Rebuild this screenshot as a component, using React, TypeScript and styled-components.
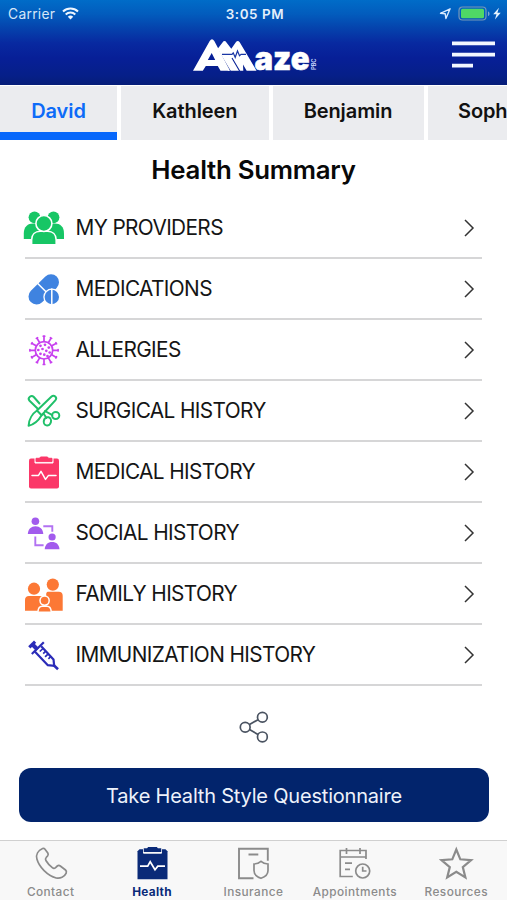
import React from "react";
import styled, { createGlobalStyle } from "styled-components";

const Global = createGlobalStyle`
  * { box-sizing: border-box; }
  body { margin: 0; background: #fff; font-family: Inter, "Liberation Sans", sans-serif; }
  svg { display: block; flex: none; overflow: visible; }
`;

const Screen = styled.div`
  width: 507px;
  height: 900px;
  display: flex;
  flex-direction: column;
  overflow: hidden;
  background: #fff;
`;

const Header = styled.header`
  height: 85px;
  flex: none;
  background: linear-gradient(#006cc8 0, #025cbd 14px, #0545ae 27px, #0829a0 43px, #071f97 58px, #061f88 76px, #061d78 85px);
  color: #fff;
`;

const StatusBar = styled.div`
  height: 27px;
  display: grid;
  grid-template-columns: 1fr auto 1fr;
  align-items: center;
  padding: 0 5px 0 8px;
`;

const StatusGroup = styled.div<{ $end?: boolean }>`
  display: flex;
  align-items: center;
  gap: 7px;
  justify-content: ${(p) => (p.$end ? "flex-end" : "flex-start")};
`;

const Carrier = styled.span`
  font-size: 13.8px;
  letter-spacing: 0.3px;
  color: #d5e6f8;
`;

const Clock = styled.span`
  font-size: 13.4px;
  font-weight: 600;
  letter-spacing: 0.6px;
  color: #e4effb;
`;

const Brand = styled.div`
  height: 58px;
  display: grid;
  grid-template-columns: 192px 126px 1fr;
  align-items: start;
`;

const MenuButton = styled.button`
  justify-self: end;
  margin: 14px 12px 0 0;
  padding: 0;
  border: 0;
  background: none;
`;

const PersonTabs = styled.nav`
  height: 55px;
  flex: none;
  display: flex;
  gap: 4px;
  padding-top: 1px;
  overflow: hidden;
`;

const PersonTab = styled.button<{ $width: number; $active?: boolean }>`
  flex: none;
  width: ${(p) => p.$width}px;
  border: 0;
  border-bottom: 8px solid ${(p) => (p.$active ? "#0767fb" : "#ebecef")};
  background: #ebecef;
  color: ${(p) => (p.$active ? "#0d6bf8" : "#111")};
  font: 600 20px Inter, sans-serif;
  letter-spacing: -0.1px;
  padding: 4px 0 0;
`;

const Title = styled.h1`
  margin: 0;
  height: 58px;
  line-height: 60px;
  text-align: center;
  font-size: 25.8px;
  letter-spacing: -0.25px;
  font-weight: 600;
  color: #080808;
`;

const List = styled.ul`
  list-style: none;
  margin: 0 25px;
  padding: 0;
`;

const Row = styled.li`
  height: 61px;
  display: flex;
  align-items: center;
  border-bottom: 2px solid #d6d6d7;
  padding-right: 7px;

  > svg:first-child { margin: 0 12.5px 0 -2px; }
`;

const RowLabel = styled.span`
  flex: 1;
  font-size: 20.8px;
  letter-spacing: -0.62px;
  color: #151515;
`;

const ShareArea = styled.div`
  flex: none;
  height: 82px;
  display: flex;
  justify-content: center;
  padding-top: 23px;
`;

const Questionnaire = styled.button`
  flex: none;
  height: 54px;
  margin: 0 18px 0 19px;
  border: 0;
  border-radius: 12px;
  background: #02246c;
  color: #eef2fb;
  font: 400 20px Inter, sans-serif;
  letter-spacing: -0.2px;
  padding: 2px 0 0;
`;

const BottomBar = styled.nav`
  margin-top: auto;
  height: 60px;
  flex: none;
  display: grid;
  grid-template-columns: repeat(5, 1fr);
  border-top: 1px solid #d0d0d0;
  background: #f8f8f8;
`;

const BottomItem = styled.div<{ $active?: boolean }>`
  display: flex;
  flex-direction: column;
  align-items: center;
  padding: 4px 0 0;
  gap: 4px;
  white-space: nowrap;
  color: ${(p) => (p.$active ? "#0a2a78" : "#8b8b8b")};
  font-size: 11.8px;
  font-weight: ${(p) => (p.$active ? 700 : 500)};
  letter-spacing: ${(p) => (p.$active ? 0.3 : 0.45)}px;
  line-height: 15px;
`;

type IconProps = { children: React.ReactNode };
const RowIcon = ({ children }: IconProps) => (
  <svg width="40" height="40" viewBox="0 0 40 40" fill="none" strokeLinecap="round" strokeLinejoin="round">
    {children}
  </svg>
);

const Providers = () => (
  <RowIcon>
    <g fill="#17c665">
      <circle cx="11.500" cy="9.300" r="5.900" />
      <circle cx="30.500" cy="9.300" r="5.900" />
      <path d="M.8 31V25.500C.8 18.500 5 15.500 10 15.500h22c5 0 9 3 9 10V31Z" />
    </g>
    <g fill="#17c665" stroke="#fff" strokeWidth="1.600">
      <path d="M8.600 36.800V32c0-5.500 3.600-8.700 8.600-8.700h7.400c5 0 8.600 3.200 8.600 8.700v4.800Z" />
      <circle cx="20.900" cy="15.500" r="8" />
    </g>
  </RowIcon>
);

const Medications = () => (
  <RowIcon>
    <path d="M13.500 27.500 28 13.200" stroke="#3f83e0" strokeWidth="16" />
    <path d="m14.500 14.200 12.500 12.500" stroke="#fff" strokeWidth="1.500" />
    <circle cx="28.800" cy="28" r="8.500" fill="#fff" />
    <circle cx="28.800" cy="28" r="7.200" fill="#3f83e0" />
    <path d="M28.800 20v16" stroke="#fff" strokeWidth="1.500" />
  </RowIcon>
);

const spokes = Array.from({ length: 12 }, (_, i) => i * 30);
const spots = [[17.5, 15.8], [22, 14.8], [25.8, 17.6], [15.3, 20], [19.5, 19], [23.3, 20.8], [26.7, 22.5], [17.5, 23.8], [21.3, 24.7], [24.5, 26]];
const Allergies = () => (
  <RowIcon>
    <g stroke="#c840ef" strokeWidth="1.700">
      <circle cx="21" cy="20.300" r="8.700" />
      {spokes.map((a) => (
        <path key={a} d="M21 11.300V6.500M20.300 6.200h1.400" transform={`rotate(${a} 21 20.300)`} />
      ))}
    </g>
    {spots.map(([x, y]) => <circle key={`${x}-${y}`} cx={x} cy={y} r="1.350" fill="#c840ef" />)}
  </RowIcon>
);

const Surgical = () => (
  <RowIcon>
    <g stroke="#20c06a" strokeWidth="2">
      <path d="M16.500 12.500 10.800 6C8.300 3.500 4.300 6.500 6.300 9.500L14.500 17.500" />
      <path d="M14 19.500 28.300 5.700c2.700-2.500 6.500.8 4 3.700L18.600 24.200Z" />
      <path d="M14 19.500C9.500 22.500 5.800 28.500 5.600 34.700c4.500-1 9.800-5 13-10.500" />
      <path d="m22 20 7.300 4.200M20.500 22.500l3 4.500" />
      <ellipse cx="24.400" cy="30.300" rx="3.600" ry="4.200" transform="rotate(15 24.400 30.300)" />
      <ellipse cx="32.700" cy="24.500" rx="3.600" ry="3.400" />
    </g>
  </RowIcon>
);

const Medical = () => (
  <RowIcon>
    <path d="M8 6.500h26a2 2 0 0 1 2 2v26a2 2 0 0 1-2 2H8a2 2 0 0 1-2-2v-26a2 2 0 0 1 2-2Z" fill="#fb3768" />
    <path d="M12 6v5h18V6" fill="#fff" stroke="#fff" strokeWidth="1" />
    <path d="M13 9.200V6.300h3.500l1-1.300h7l1 1.300H29v2.900Z" fill="#fb3768" stroke="#fb3768" strokeWidth="1" />
    <path d="M9 23.400h6.500l2.500-4 4.500 8 3-4H33" stroke="#fff" strokeWidth="1.500" />
  </RowIcon>
);

const Social = () => (
  <RowIcon>
    <g fill="#a25bed">
      <circle cx="12.400" cy="8.200" r="3.800" />
      <path d="M4.800 21c.3-4.900 3.400-7.700 7.700-7.700s7.500 2.800 7.800 7.700Z" />
      <circle cx="29.100" cy="24" r="3.600" />
      <path d="M21.700 36.200c.3-4.600 3.300-7.200 7.400-7.200s7.100 2.600 7.400 7.200Z" />
    </g>
    <g stroke="#b272f2" strokeWidth="1.900" strokeLinecap="butt" strokeLinejoin="miter">
      <path d="M20.300 13.200h9v5.500M12.300 23.500v8.700h8.300" />
    </g>
  </RowIcon>
);

const Family = () => (
  <RowIcon>
    <g fill="#fc7835">
      <circle cx="11" cy="14.700" r="6.100" />
      <circle cx="29.800" cy="10.600" r="6.100" />
      <path d="M2 36.700V26c0-2.500 1.500-3.900 4-3.900h11l5 1 1.200-1V20c0-1.600 1-2.200 2.500-2.200h10c2.700 0 4 1.400 4 4v14.900Z" />
    </g>
    <g stroke="#fff" strokeWidth="1.500" fill="#fc7835">
      <path d="M15 37.500c.2-3.700 1.800-5.300 4.200-5.300h4.800c2.400 0 4 1.600 4.200 5.300" />
      <circle cx="21.600" cy="26.600" r="4.600" />
    </g>
  </RowIcon>
);

const Syringe = () => (
  <RowIcon>
    <g stroke="#2b2cb8" strokeWidth="2.200" strokeLinecap="butt" strokeLinejoin="miter">
      <path d="m6.300 12.300 5.800-5.600" strokeWidth="3.200" />
      <path d="m9.500 9.500 5 5" strokeWidth="4" />
      <path d="m8.800 19 12-11.700" />
      <path d="m11.800 16.500 13 13.700 6.400.6-.7-6.400L18.200 11.200" />
      <path d="m30.500 30 4.500 4.200" strokeWidth="2.600" />
      <path d="m20 13.500-3.200 3M22.700 16.200l-2.500 2.400M25.200 18.800l-3.100 3M27.800 21.500l-2.400 2.300" strokeWidth="1.700" />
    </g>
  </RowIcon>
);

const Chevron = () => (
  <svg width="12" height="18" viewBox="0 0 12 18" fill="none" stroke="#333" strokeWidth="1.500">
    <path d="m2 1 8 8-8 8" />
  </svg>
);

const Wifi = () => (
  <svg width="17" height="13" viewBox="0 0 17 13" fill="none" stroke="#eef6ff" strokeWidth="2">
    <path d="M1 4.500a10.800 10.800 0 0 1 15 0M3.700 7.500a7 7 0 0 1 9.600 0" />
    <path d="M5.800 9.700a4 4 0 0 1 5.400 0L8.500 12.400Z" fill="#eef6ff" stroke="none" />
  </svg>
);

const Power = () => (
  <svg width="63" height="16" viewBox="0 0 63 16" fill="none">
    <path d="m1.500 7.300 9.600-4.500-4.200 9.700-.7-4.700Z" stroke="#d9eaff" strokeWidth="1.400" strokeLinejoin="round" />
    <rect x="20" y="1" width="27" height="13" rx="3.500" stroke="#7697b8" strokeWidth="1.200" />
    <rect x="22" y="2.800" width="23" height="9.400" rx="1.500" fill="#4fd865" />
    <path d="M49 5.500V10c2-.6 2-3.900 0-4.500Z" fill="#7da4d0" />
    <path d="m60 1.700-5.800 6.500h3.300l-1.600 5.300 5.800-6.800h-3.300Z" fill="#e6f3ff" />
  </svg>
);

const Logo = () => (
  <svg width="126" height="50" viewBox="192 27 126 50">
    <path d="m217.500 49 5-6.600q2-2.600 4 0l4.800 6.400 4.700-6.800q1.900-2.300 3.700.3L256.500 70.700h-9.800l-3.700-6.200.3 6.200H228Z" fill="#fff" />
    <path d="m216.500 48 14.300 24M232 58l8.500 14.500" stroke="#0a2396" strokeWidth="1.100" />
    <path d="M193 70.700 209.700 41q2.300-3.500 4.600 0l15.700 29.700h-9.500l-2.700-4.700h-12l-3 4.700Zm14.800-10.700h7.400l-3.500-7Z" fill="#fff" fillRule="evenodd" />
    <path d="M222 54.300h10l1.200-1.500 2 4.500 2.300-6.300 2 4.800 1.500-1.500h5" fill="none" stroke="#1a37a5" strokeWidth="1.200" />
    <text x="254.500" y="70.300" fontFamily="Inter" fontSize="33" fontWeight="900" fill="#fff" stroke="#fff" strokeWidth=".5" textLength="55" lengthAdjust="spacingAndGlyphs">aze</text>
    <text transform="translate(315.500 70) rotate(-90)" fontFamily="Inter" fontSize="5.800" fontWeight="600" fill="#cfdcff" textLength="11.500">PBC</text>
  </svg>
);

const MenuIcon = () => (
  <svg width="43" height="28" viewBox="0 0 43 28" fill="#f2f7ff">
    <path d="M0 .5h43v3.700H0ZM0 11.800h43v3.700H0ZM0 22.800h21v3.700H0Z" />
  </svg>
);

const ShareIcon = () => (
  <svg width="30" height="34" viewBox="0 0 30 34" fill="none" stroke="#4a5361" strokeWidth="1.700">
    <circle cx="6.200" cy="18.200" r="4.900" />
    <circle cx="23.400" cy="8.200" r="4.900" />
    <circle cx="23.400" cy="27.900" r="4.900" />
    <path d="m10.500 15.600 8.500-4.900m-8.500 9.900 8.500 4.900" />
  </svg>
);

const NavIcon = ({ children }: IconProps) => (
  <svg width="34" height="36" viewBox="0 0 34 36" fill="none" stroke="currentColor" strokeWidth="1.700">
    {children}
  </svg>
);

const ContactIcon = () => (
  <NavIcon>
    <path d="M8.600 3.500c-4.500 2-7 6-5.700 10.600C5 22 13.500 30.800 22.200 33c4 .8 8.300-1 10-4.800.5-1.400.3-2.300-.7-3.200l-5.200-4c-1-.8-2-.8-3 0l-2 1.800c-1 .9-2 .7-3-.1-3-2.400-5-4.800-6.400-7.200-.7-1.200-.6-2 .3-3l1.500-1.800c.7-1 .7-1.700.1-2.700l-3-4c-.6-.8-1.300-.9-2.200-.5Z" />
  </NavIcon>
);

const HealthIcon = () => (
  <NavIcon>
    <path d="M4.500 4.200h26l2 2v28h-30v-28Z" fill="currentColor" stroke="none" />
    <path d="M8.500 3v5.200h18V3" fill="#f8f8f8" stroke="#f8f8f8" strokeWidth="1" />
    <path d="M9.500 6.300V4h3l1-1.300h8l1 1.300h3v2.300Z" fill="currentColor" strokeWidth="1.500" />
    <path d="M5 21.200h7.700l2.500-4.500 4.800 8 2.800-3.500H30" stroke="#fff" strokeWidth="1.700" />
  </NavIcon>
);

const InsuranceIcon = () => (
  <NavIcon>
    <path d="M17.500 33.300H3V3.700h28.800v12M12.500 9.500h9.800" strokeWidth="1.900" />
    <path d="M25 16.300c2 1.800 4.300 2.600 7 2.700v6.500c0 4-2.800 6.400-7 7.800-4.200-1.400-7-3.800-7-7.800V19c2.700-.1 5-.9 7-2.700Z" />
  </NavIcon>
);

const AppointmentsIcon = () => (
  <NavIcon>
    <path d="M14.800 31.500H2.200V5.500H28v8.500M2.200 12H28M8.500 3v6M22 3v6M7 18.200h7M7 24.300h5" />
    <circle cx="24.700" cy="26" r="7" />
    <path d="M24.700 21.800V26h3.800" />
  </NavIcon>
);

const ResourcesIcon = () => (
  <NavIcon>
    <path d="m17.300 4.500 4 9.800 10.800.8-8.300 7 2.600 10.400-9.100-5.600-9.100 5.600 2.600-10.400-8.300-7 10.800-.8Z" strokeWidth="2.200" />
  </NavIcon>
);

const people = [
  { name: "David", width: 117 },
  { name: "Kathleen", width: 147.5 },
  { name: "Benjamin", width: 151 },
  { name: "Sophia", width: 127 },
];

const sections = [
  { label: "MY PROVIDERS", Icon: Providers },
  { label: "MEDICATIONS", Icon: Medications },
  { label: "ALLERGIES", Icon: Allergies },
  { label: "SURGICAL HISTORY", Icon: Surgical },
  { label: "MEDICAL HISTORY", Icon: Medical },
  { label: "SOCIAL HISTORY", Icon: Social },
  { label: "FAMILY HISTORY", Icon: Family },
  { label: "IMMUNIZATION HISTORY", Icon: Syringe },
];

const destinations = [
  { label: "Contact", Icon: ContactIcon },
  { label: "Health", Icon: HealthIcon },
  { label: "Insurance", Icon: InsuranceIcon },
  { label: "Appointments", Icon: AppointmentsIcon },
  { label: "Resources", Icon: ResourcesIcon },
];

export default function App() {
  return (
    <Screen>
      <Global />
      <Header>
        <StatusBar>
          <StatusGroup><Carrier>Carrier</Carrier><Wifi /></StatusGroup>
          <Clock>3:05 PM</Clock>
          <StatusGroup $end><Power /></StatusGroup>
        </StatusBar>
        <Brand>
          <span />
          <Logo />
          <MenuButton aria-label="Menu"><MenuIcon /></MenuButton>
        </Brand>
      </Header>
      <PersonTabs>
        {people.map((p, i) => (
          <PersonTab key={p.name} $width={p.width} $active={i === 0}>{p.name}</PersonTab>
        ))}
      </PersonTabs>
      <Title>Health Summary</Title>
      <List>
        {sections.map(({ label, Icon }) => (
          <Row key={label}><Icon /><RowLabel>{label}</RowLabel><Chevron /></Row>
        ))}
      </List>
      <ShareArea><ShareIcon /></ShareArea>
      <Questionnaire>Take Health Style Questionnaire</Questionnaire>
      <BottomBar>
        {destinations.map(({ label, Icon }) => (
          <BottomItem key={label} $active={label === "Health"}><Icon />{label}</BottomItem>
        ))}
      </BottomBar>
    </Screen>
  );
}
